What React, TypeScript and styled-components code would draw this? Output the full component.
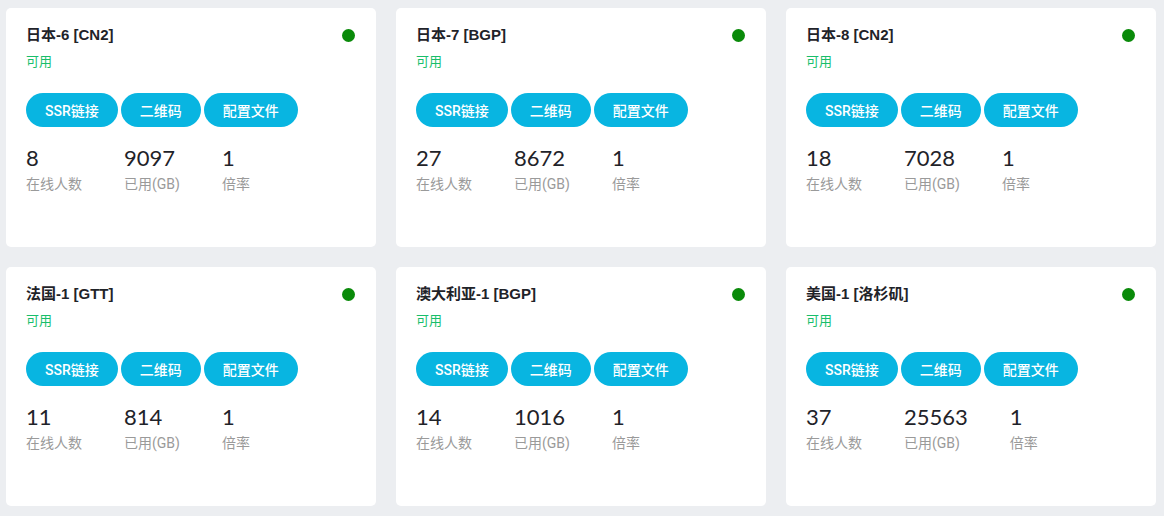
import React from "react";
import styled, { createGlobalStyle } from "styled-components";

const GlobalStyle = createGlobalStyle`
  html, body {
    margin: 0;
    padding: 0;
    background: #eceef1;
    font-family: Roboto, "Noto Sans CJK SC", sans-serif;
  }
`;

const Page = styled.div`
  display: grid;
  grid-template-columns: repeat(3, 370px);
  grid-auto-rows: 239px;
  column-gap: 20px;
  row-gap: 20px;
  padding: 8px 0 0 6px;
`;

const Card = styled.div`
  background: #ffffff;
  border-radius: 5px;
  padding: 17px 20px 0 20px;
  box-sizing: border-box;
  display: flex;
  flex-direction: column;
`;

const Header = styled.div`
  display: flex;
  align-items: center;
  justify-content: space-between;
  height: 20px;
`;

const Title = styled.div`
  font-family: "Liberation Sans", "Noto Sans CJK SC", sans-serif;
  font-size: 15px;
  font-weight: 700;
  color: #1f2329;
  line-height: 20px;
`;

const Dot = styled.span`
  width: 13px;
  height: 13px;
  border-radius: 50%;
  background: #0a8a0a;
  margin-right: 1px;
`;

const Status = styled.div`
  margin-top: 9px;
  font-size: 13px;
  line-height: 16px;
  color: #19be6b;
`;

const Actions = styled.div`
  display: flex;
  gap: 3px;
  margin-top: 23px;
`;

const ActionButton = styled.button`
  height: 34px;
  padding: 0 19px;
  border: none;
  border-radius: 17px;
  background: #08b5e1;
  color: #ffffff;
  font-family: Roboto, "Noto Sans CJK SC", sans-serif;
  font-size: 14px;
  font-weight: 500;
  cursor: pointer;
`;

const Stats = styled.div`
  display: flex;
  gap: 42px;
  margin-top: 18px;
`;

const Stat = styled.div`
  display: flex;
  flex-direction: column;
`;

const StatValue = styled.div`
  font-family: Lato, "Noto Sans", sans-serif;
  font-size: 22px;
  line-height: 26px;
  color: #1f2329;
`;

const StatLabel = styled.div`
  margin-top: 3px;
  font-size: 14px;
  line-height: 20px;
  color: #9a9a9a;
`;

type Node = { name: string; online: number; used: number; rate: number };

const nodes: Node[] = [
  { name: "日本-6 [CN2]", online: 8, used: 9097, rate: 1 },
  { name: "日本-7 [BGP]", online: 27, used: 8672, rate: 1 },
  { name: "日本-8 [CN2]", online: 18, used: 7028, rate: 1 },
  { name: "法国-1 [GTT]", online: 11, used: 814, rate: 1 },
  { name: "澳大利亚-1 [BGP]", online: 14, used: 1016, rate: 1 },
  { name: "美国-1 [洛杉矶]", online: 37, used: 25563, rate: 1 },
];

export default function App() {
  return (
    <>
      <GlobalStyle />
      <Page>
        {nodes.map((n) => (
          <Card key={n.name}>
            <Header>
              <Title>{n.name}</Title>
              <Dot />
            </Header>
            <Status>可用</Status>
            <Actions>
              <ActionButton>SSR链接</ActionButton>
              <ActionButton>二维码</ActionButton>
              <ActionButton>配置文件</ActionButton>
            </Actions>
            <Stats>
              <Stat>
                <StatValue>{n.online}</StatValue>
                <StatLabel>在线人数</StatLabel>
              </Stat>
              <Stat>
                <StatValue>{n.used}</StatValue>
                <StatLabel>已用(GB)</StatLabel>
              </Stat>
              <Stat>
                <StatValue>{n.rate}</StatValue>
                <StatLabel>倍率</StatLabel>
              </Stat>
            </Stats>
          </Card>
        ))}
      </Page>
    </>
  );
}
